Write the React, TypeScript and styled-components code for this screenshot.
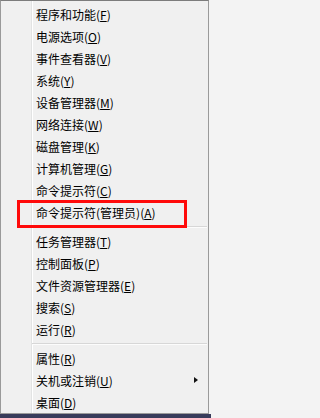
import React from "react";
import styled, { createGlobalStyle } from "styled-components";

const GlobalStyle = createGlobalStyle`
  html, body {
    margin: 0;
    padding: 0;
  }
  body {
    background: #f3f3f3;
    font-family: "Noto Sans CJK SC", "Noto Sans", sans-serif;
  }
`;

const Screen = styled.div`
  width: 211px;
  height: 418px;
  display: flex;
  flex-direction: column;
  overflow: hidden;
  background: #f3f3f3;
`;

const Menu = styled.div`
  box-sizing: border-box;
  width: 209px;
  height: 414px;
  padding-top: 2px;
  border: 1px solid #9a9a9a;
  border-top-color: #7c7c7c;
  background: linear-gradient(
    to right,
    #f0f0f0 30px,
    #e2e3e3 30px,
    #e2e3e3 31px,
    #ffffff 31px,
    #ffffff 32px,
    #f0f0f0 32px
  );
  display: flex;
  flex-direction: column;
`;

const Row = styled.div`
  position: relative;
  height: 22px;
  display: flex;
  align-items: center;
  padding-left: 35px;
  padding-right: 10px;
  font-size: 12px;
  color: #000;
  white-space: nowrap;

  u {
    text-decoration-thickness: 1px;
    text-underline-offset: 1px;
  }
`;

const Separator = styled.div`
  height: 7px;
  display: flex;
  align-items: center;
  margin-left: 31px;
  margin-right: 1px;

  &::after {
    content: "";
    flex: 1;
    height: 1px;
    background: #d7d7d7;
    border-bottom: 1px solid #fcfcfc;
  }
`;

const Arrow = styled.span`
  margin-left: auto;
  width: 0;
  height: 0;
  border-top: 3.5px solid transparent;
  border-bottom: 3.5px solid transparent;
  border-left: 4px solid #111;
`;

const Highlight = styled.div`
  position: absolute;
  top: -1px;
  left: 16px;
  width: 170px;
  height: 28px;
  box-sizing: border-box;
  border: 3px solid #ff0a0a;
  pointer-events: none;
`;

const Desktop = styled.div`
  flex: 1;
  background: #383b5a;
`;

type Item = {
  label: string;
  key: string;
  sub?: boolean;
  marked?: boolean;
};

const groups: Item[][] = [
  [
    { label: "程序和功能", key: "F" },
    { label: "电源选项", key: "O" },
    { label: "事件查看器", key: "V" },
    { label: "系统", key: "Y" },
    { label: "设备管理器", key: "M" },
    { label: "网络连接", key: "W" },
    { label: "磁盘管理", key: "K" },
    { label: "计算机管理", key: "G" },
    { label: "命令提示符", key: "C" },
    { label: "命令提示符(管理员)", key: "A", marked: true },
  ],
  [
    { label: "任务管理器", key: "T" },
    { label: "控制面板", key: "P" },
    { label: "文件资源管理器", key: "E" },
    { label: "搜索", key: "S" },
    { label: "运行", key: "R" },
  ],
  [
    { label: "属性", key: "R" },
    { label: "关机或注销", key: "U", sub: true },
    { label: "桌面", key: "D" },
  ],
];

export default function App() {
  return (
    <>
      <GlobalStyle />
      <Screen>
        <Menu>
          {groups.map((group, gi) => (
            <React.Fragment key={gi}>
              {gi > 0 && <Separator />}
              {group.map((item) => (
                <Row key={item.label}>
                  <span>
                    {item.label}(<u>{item.key}</u>)
                  </span>
                  {item.sub && <Arrow />}
                  {item.marked && <Highlight />}
                </Row>
              ))}
            </React.Fragment>
          ))}
        </Menu>
        <Desktop />
      </Screen>
    </>
  );
}
